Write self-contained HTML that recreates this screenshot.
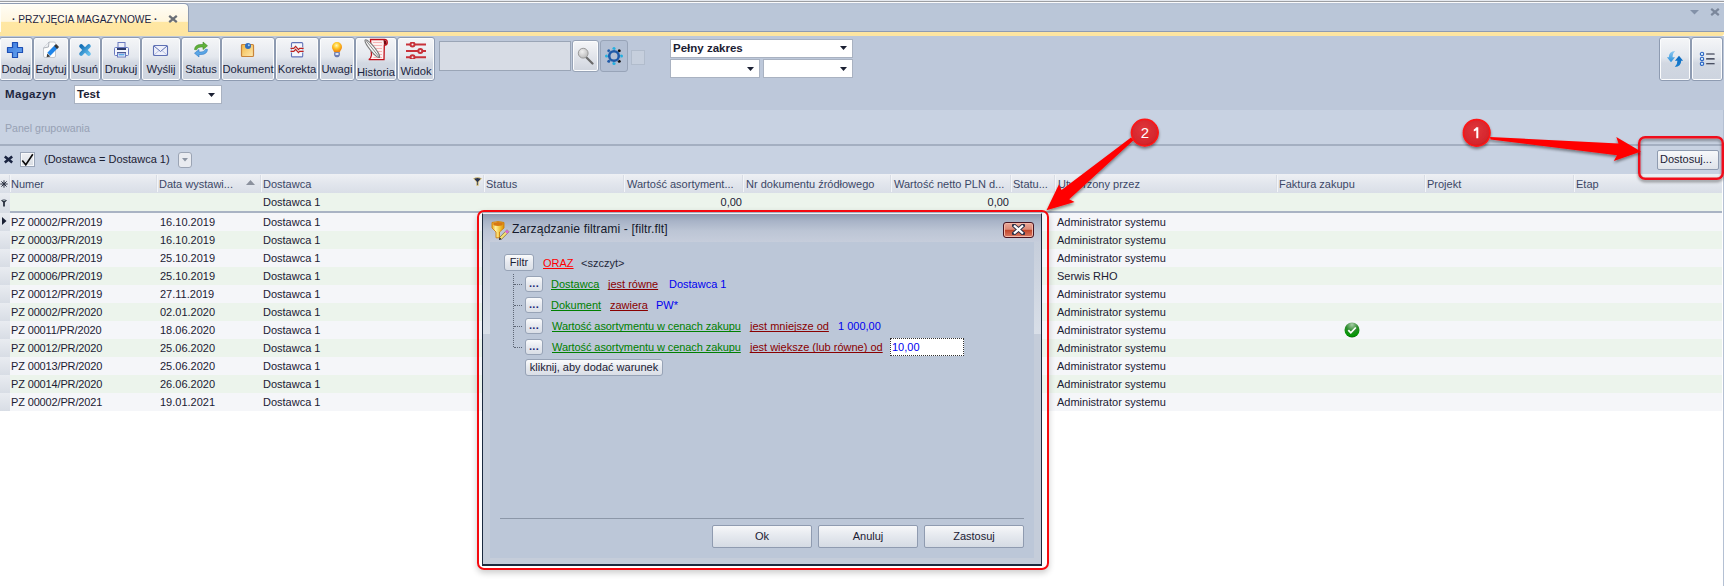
<!DOCTYPE html>
<html><head><meta charset="utf-8">
<style>
*{box-sizing:border-box;margin:0;padding:0}
html,body{width:1724px;height:586px;overflow:hidden;background:#fff;font-family:"Liberation Sans",sans-serif;font-size:11px;color:#1b2033}
.a{position:absolute}
.t{position:absolute;white-space:pre;line-height:13px;text-decoration-skip-ink:none}
.btn{position:absolute;top:37px;height:44px;border:1px solid #8e9bb1;border-radius:3px;box-shadow:inset 0 0 0 1px #fbfcfd;background:linear-gradient(#f5f6f8,#e4e8ee 45%,#d2d8e2 60%,#cdd4df);}
.btn span{position:absolute;left:0;right:0;top:25px;text-align:center;font-size:11.2px;color:#1c2540;white-space:pre}
.ico{position:absolute;left:50%;top:3px;width:20px;height:20px;margin-left:-10px}
.hd{position:absolute;top:175px;height:19px;line-height:19px;color:#3b4766;white-space:pre}
.row{position:absolute;left:0;width:1724px;height:18px}
.cell{position:absolute;top:2px;line-height:14px;white-space:pre;color:#1b2033}
.dbtn{position:absolute;top:525px;height:23px;border:1px solid #8f9bb0;border-radius:2px;background:linear-gradient(#f6f7f9,#e4e8ee 50%,#d5dbe4);text-align:center;line-height:21px;color:#1b2033}
.sbtn{position:absolute;border:1px solid #97a3b6;border-radius:3px;background:linear-gradient(#fafbfc,#e6e9ef 50%,#d9dee6);text-align:center;line-height:14px;color:#1b2033;white-space:pre}
</style></head><body>
<!-- top strip -->
<div class="a" style="left:0;top:0;width:1724px;height:1px;background:#e4e8ef"></div>
<div class="a" style="left:0;top:1px;width:1724px;height:1px;background:#9c9ea2"></div>
<div class="a" style="left:0;top:2px;width:1724px;height:1px;background:#fbfbfc"></div>
<!-- tab bar -->
<div class="a" style="left:0;top:3px;width:1724px;height:29px;background:linear-gradient(#b4c0d3,#bac6d8 3px);border-bottom:1px solid #8e9bb2"></div>
<div class="a" style="left:-1px;top:3px;width:190px;height:30px;border:1px solid #8e9bb2;border-bottom:none;border-radius:0 5px 0 0;box-shadow:inset 1px 1px 0 #fffef8;background:linear-gradient(#fffdf6,#fff6df 60%,#ffe7a3 62%,#ffe5a0)"></div>
<div class="t" style="left:12px;top:13px;font-size:10.2px;color:#1d2440"><b>·</b> PRZYJĘCIA MAGAZYNOWE <b>·</b></div>
<svg class="a" style="left:168px;top:15px" width="10" height="8" viewBox="0 0 10 8"><path d="M1.2 0.8l7.6 6.4M8.8 0.8l-7.6 6.4" stroke="#6a6e76" stroke-width="2.2"/></svg>
<div class="a" style="left:0;top:32px;width:1724px;height:4px;background:#fde5a1;border-radius:0 0 3px 0"></div>
<!-- window controls -->
<svg class="a" style="left:1690px;top:10px" width="9" height="5"><path d="M0 0h9L4.5 4.5z" fill="#8391a8"/></svg>
<svg class="a" style="left:1710px;top:8px" width="10" height="8" viewBox="0 0 10 8"><path d="M1.2 0.8l7.6 6.4M8.8 0.8l-7.6 6.4" stroke="#7b879b" stroke-width="2.2"/></svg>
<!-- toolbar -->
<div class="a" style="left:0;top:36px;width:1724px;height:74px;background:#bdc8da"></div>
<div class="btn" style="left:-1px;width:34px"><span>Dodaj</span></div>
<div class="btn" style="left:33px;width:36px"><span>Edytuj</span></div>
<div class="btn" style="left:69px;width:32px"><span>Usuń</span></div>
<div class="btn" style="left:101px;width:40px"><span>Drukuj</span></div>
<div class="btn" style="left:141px;width:40px"><span>Wyślij</span></div>
<div class="btn" style="left:181px;width:40px"><span>Status</span></div>
<div class="btn" style="left:221px;width:54px"><span>Dokument</span></div>
<div class="btn" style="left:275px;width:44px"><span>Korekta</span></div>
<div class="btn" style="left:319px;width:36px"><span>Uwagi</span></div>
<div class="btn" style="left:355px;width:42px"><span style="top:28px">Historia</span></div>
<div class="btn" style="left:397px;width:38px"><span style="top:26.5px">Widok</span></div>
<!-- search -->
<div class="a" style="left:439px;top:41px;width:132px;height:30px;background:#d7dce5;border:1px solid #9aa5b6"></div>
<div class="a" style="left:572px;top:40px;width:27px;height:32px;border:1px solid #97a3b6;border-radius:3px;box-shadow:inset 0 0 0 1px #fbfcfd;background:linear-gradient(#f5f6f8,#e2e5eb 50%,#d0d5de)"></div>
<div class="a" style="left:600px;top:40px;width:28px;height:32px;border:1px solid #98a4b8;border-radius:3px;background:#b3bfd3"></div>
<div class="a" style="left:631px;top:50px;width:14px;height:15px;border:1px solid #b1bccc;background:#c6cfdd"></div>
<!-- combos -->
<div class="a" style="left:670px;top:39px;width:183px;height:19px;background:#fff;border:1px solid #a9b2c1"></div>
<div class="t" style="left:673px;top:42px;font-weight:bold;font-size:11.5px;color:#1b2033">Pełny zakres</div>
<div class="a" style="left:670px;top:59px;width:90px;height:19px;background:#fff;border:1px solid #a9b2c1"></div>
<div class="a" style="left:763px;top:59px;width:90px;height:19px;background:#fff;border:1px solid #a9b2c1"></div>
<!-- right buttons -->
<div class="a" style="left:1659px;top:37px;width:32px;height:44px;box-shadow:inset 0 0 0 1px #fbfcfd;border:1px solid #8e9bb1;border-radius:3px;background:linear-gradient(#f5f6f8,#e4e8ee 45%,#d2d8e2 60%,#cdd4df)"></div>
<div class="a" style="left:1691px;top:37px;width:32px;height:44px;box-shadow:inset 0 0 0 1px #fbfcfd;border:1px solid #8e9bb1;border-radius:3px;background:linear-gradient(#f5f6f8,#e4e8ee 45%,#d2d8e2 60%,#cdd4df)"></div>
<!-- magazyn -->
<div class="t" style="left:5px;top:88px;font-weight:bold;font-size:11.5px;letter-spacing:0.35px;color:#1e2740">Magazyn</div>
<div class="a" style="left:74px;top:85px;width:148px;height:19px;background:#fff;border:1px solid #a9b2c1"></div>
<div class="t" style="left:77px;top:88px;font-weight:bold;font-size:11.5px;color:#1b2033">Test</div>
<!-- panel grupowania -->
<div class="a" style="left:0;top:110px;width:1724px;height:34px;background:#c8d2e2"></div>
<div class="t" style="left:5px;top:122px;font-size:10.6px;color:#97a1b4">Panel grupowania</div>
<div class="a" style="left:0;top:144px;width:1724px;height:2px;background:#a4afc1"></div>
<!-- filter bar -->
<div class="a" style="left:0;top:146px;width:1724px;height:28px;background:#c8d2e2"></div>
<div class="t" style="left:44px;top:153px;color:#1b2033">(Dostawca = Dostawca 1)</div>
<div class="a" style="left:1657px;top:150px;width:62px;height:20px;border:1px solid #8f9bb0;border-radius:2px;background:linear-gradient(#f7f8fa,#dfe3ea)"></div>
<div class="t" style="left:1660px;top:153px;color:#1b2033">Dostosuj...</div>
<!-- header -->
<div class="a" style="left:0;top:174px;width:1724px;height:19px;background:linear-gradient(#eef0f4,#e2e6ed 50%,#d9dee7)"></div>
<div class="a" style="left:10px;top:175px;width:1px;height:17px;background:#f3f5f8"></div>
<div class="a" style="left:9px;top:175px;width:1px;height:17px;background:#d9dde5"></div>
<div class="hd" style="left:11px">Numer</div>
<div class="a" style="left:157px;top:175px;width:1px;height:17px;background:#f3f5f8"></div>
<div class="a" style="left:156px;top:175px;width:1px;height:17px;background:#d9dde5"></div>
<div class="hd" style="left:159px">Data wystawi...</div>
<div class="a" style="left:261px;top:175px;width:1px;height:17px;background:#f3f5f8"></div>
<div class="a" style="left:260px;top:175px;width:1px;height:17px;background:#d9dde5"></div>
<div class="hd" style="left:263px">Dostawca</div>
<div class="a" style="left:484px;top:175px;width:1px;height:17px;background:#f3f5f8"></div>
<div class="a" style="left:483px;top:175px;width:1px;height:17px;background:#d9dde5"></div>
<div class="hd" style="left:486px">Status</div>
<div class="a" style="left:624px;top:175px;width:1px;height:17px;background:#f3f5f8"></div>
<div class="a" style="left:623px;top:175px;width:1px;height:17px;background:#d9dde5"></div>
<div class="hd" style="left:627px">Wartość asortyment...</div>
<div class="a" style="left:743px;top:175px;width:1px;height:17px;background:#f3f5f8"></div>
<div class="a" style="left:742px;top:175px;width:1px;height:17px;background:#d9dde5"></div>
<div class="hd" style="left:746px">Nr dokumentu źródłowego</div>
<div class="a" style="left:891px;top:175px;width:1px;height:17px;background:#f3f5f8"></div>
<div class="a" style="left:890px;top:175px;width:1px;height:17px;background:#d9dde5"></div>
<div class="hd" style="left:894px">Wartość netto PLN d...</div>
<div class="a" style="left:1011px;top:175px;width:1px;height:17px;background:#f3f5f8"></div>
<div class="a" style="left:1010px;top:175px;width:1px;height:17px;background:#d9dde5"></div>
<div class="hd" style="left:1013px">Statu...</div>
<div class="a" style="left:1055px;top:175px;width:1px;height:17px;background:#f3f5f8"></div>
<div class="a" style="left:1054px;top:175px;width:1px;height:17px;background:#d9dde5"></div>
<div class="hd" style="left:1058px">Utworzony przez</div>
<div class="a" style="left:1277px;top:175px;width:1px;height:17px;background:#f3f5f8"></div>
<div class="a" style="left:1276px;top:175px;width:1px;height:17px;background:#d9dde5"></div>
<div class="hd" style="left:1279px">Faktura zakupu</div>
<div class="a" style="left:1425px;top:175px;width:1px;height:17px;background:#f3f5f8"></div>
<div class="a" style="left:1424px;top:175px;width:1px;height:17px;background:#d9dde5"></div>
<div class="hd" style="left:1427px">Projekt</div>
<div class="a" style="left:1574px;top:175px;width:1px;height:17px;background:#f3f5f8"></div>
<div class="a" style="left:1573px;top:175px;width:1px;height:17px;background:#d9dde5"></div>
<div class="hd" style="left:1576px">Etap</div>
<!-- filter row -->
<div class="a" style="left:0;top:193px;width:1724px;height:18px;background:#ecf4ec"></div>
<div class="a" style="left:0;top:193px;width:10px;height:18px;background:linear-gradient(#e9ecf1,#d8dde5)"></div>
<div class="a" style="left:0;top:211px;width:10px;height:2px;background:#d8dde5"></div><div class="a" style="left:10px;top:211px;width:1714px;height:2px;background:#a9b3c4"></div>
<!-- rows -->
<div class="row" style="top:213px;background:#f5f6f9"><div class="a" style="left:0;top:0;width:10px;height:18px;background:linear-gradient(#e9ecf1,#d8dde5)"></div><div class="cell" style="left:11px;letter-spacing:-0.15px">PZ 00002/PR/2019</div><div class="cell" style="left:160px">16.10.2019</div><div class="cell" style="left:263px">Dostawca 1</div><div class="cell" style="left:1057px">Administrator systemu</div></div>
<div class="row" style="top:231px;background:#ecf4ec"><div class="a" style="left:0;top:0;width:10px;height:18px;background:linear-gradient(#e9ecf1,#d8dde5)"></div><div class="cell" style="left:11px;letter-spacing:-0.15px">PZ 00003/PR/2019</div><div class="cell" style="left:160px">16.10.2019</div><div class="cell" style="left:263px">Dostawca 1</div><div class="cell" style="left:1057px">Administrator systemu</div></div>
<div class="row" style="top:249px;background:#f5f6f9"><div class="a" style="left:0;top:0;width:10px;height:18px;background:linear-gradient(#e9ecf1,#d8dde5)"></div><div class="cell" style="left:11px;letter-spacing:-0.15px">PZ 00008/PR/2019</div><div class="cell" style="left:160px">25.10.2019</div><div class="cell" style="left:263px">Dostawca 1</div><div class="cell" style="left:1057px">Administrator systemu</div></div>
<div class="row" style="top:267px;background:#ecf4ec"><div class="a" style="left:0;top:0;width:10px;height:18px;background:linear-gradient(#e9ecf1,#d8dde5)"></div><div class="cell" style="left:11px;letter-spacing:-0.15px">PZ 00006/PR/2019</div><div class="cell" style="left:160px">25.10.2019</div><div class="cell" style="left:263px">Dostawca 1</div><div class="cell" style="left:1057px">Serwis RHO</div></div>
<div class="row" style="top:285px;background:#f5f6f9"><div class="a" style="left:0;top:0;width:10px;height:18px;background:linear-gradient(#e9ecf1,#d8dde5)"></div><div class="cell" style="left:11px;letter-spacing:-0.15px">PZ 00012/PR/2019</div><div class="cell" style="left:160px">27.11.2019</div><div class="cell" style="left:263px">Dostawca 1</div><div class="cell" style="left:1057px">Administrator systemu</div></div>
<div class="row" style="top:303px;background:#ecf4ec"><div class="a" style="left:0;top:0;width:10px;height:18px;background:linear-gradient(#e9ecf1,#d8dde5)"></div><div class="cell" style="left:11px;letter-spacing:-0.15px">PZ 00002/PR/2020</div><div class="cell" style="left:160px">02.01.2020</div><div class="cell" style="left:263px">Dostawca 1</div><div class="cell" style="left:1057px">Administrator systemu</div></div>
<div class="row" style="top:321px;background:#f5f6f9"><div class="a" style="left:0;top:0;width:10px;height:18px;background:linear-gradient(#e9ecf1,#d8dde5)"></div><div class="cell" style="left:11px;letter-spacing:-0.15px">PZ 00011/PR/2020</div><div class="cell" style="left:160px">18.06.2020</div><div class="cell" style="left:263px">Dostawca 1</div><div class="cell" style="left:1057px">Administrator systemu</div></div>
<div class="row" style="top:339px;background:#ecf4ec"><div class="a" style="left:0;top:0;width:10px;height:18px;background:linear-gradient(#e9ecf1,#d8dde5)"></div><div class="cell" style="left:11px;letter-spacing:-0.15px">PZ 00012/PR/2020</div><div class="cell" style="left:160px">25.06.2020</div><div class="cell" style="left:263px">Dostawca 1</div><div class="cell" style="left:1057px">Administrator systemu</div></div>
<div class="row" style="top:357px;background:#f5f6f9"><div class="a" style="left:0;top:0;width:10px;height:18px;background:linear-gradient(#e9ecf1,#d8dde5)"></div><div class="cell" style="left:11px;letter-spacing:-0.15px">PZ 00013/PR/2020</div><div class="cell" style="left:160px">25.06.2020</div><div class="cell" style="left:263px">Dostawca 1</div><div class="cell" style="left:1057px">Administrator systemu</div></div>
<div class="row" style="top:375px;background:#ecf4ec"><div class="a" style="left:0;top:0;width:10px;height:18px;background:linear-gradient(#e9ecf1,#d8dde5)"></div><div class="cell" style="left:11px;letter-spacing:-0.15px">PZ 00014/PR/2020</div><div class="cell" style="left:160px">26.06.2020</div><div class="cell" style="left:263px">Dostawca 1</div><div class="cell" style="left:1057px">Administrator systemu</div></div>
<div class="row" style="top:393px;background:#f5f6f9"><div class="a" style="left:0;top:0;width:10px;height:18px;background:linear-gradient(#e9ecf1,#d8dde5)"></div><div class="cell" style="left:11px;letter-spacing:-0.15px">PZ 00002/PR/2021</div><div class="cell" style="left:160px">19.01.2021</div><div class="cell" style="left:263px">Dostawca 1</div><div class="cell" style="left:1057px">Administrator systemu</div></div>
<div class="a" style="left:1722px;top:174px;width:1px;height:412px;background:#fff"></div><div class="a" style="left:1723px;top:110px;width:1px;height:476px;background:#b4c0d3"></div>

<!-- filter row values -->
<div class="cell" style="left:263px;top:195px">Dostawca 1</div>
<div class="cell" style="left:700px;top:195px;width:42px;text-align:right">0,00</div>
<div class="cell" style="left:967px;top:195px;width:42px;text-align:right">0,00</div>

<!-- TOOLBAR ICONS -->
<svg class="a" style="left:6px;top:41px" width="18" height="18" viewBox="0 0 18 18">
 <defs><linearGradient id="gp" x1="0" y1="0" x2="1" y2="1"><stop offset="0" stop-color="#3a78de"/><stop offset="1" stop-color="#6aa8f0"/></linearGradient></defs>
 <path d="M6.5 1.5h5v5h5v5h-5v5h-5v-5h-5v-5h5z" fill="url(#gp)" stroke="#1d4fb5" stroke-width="1.2" stroke-linejoin="round"/>
</svg>
<svg class="a" style="left:40px;top:40px" width="20" height="20" viewBox="0 0 20 20">
 <path d="M3.5 8L9 2h5q1.5 0 1.5 1.5V16q0 1.5-1.5 1.5H5q-1.5 0-1.5-1.5z" fill="#fdfdfd" stroke="#c4c8ce" stroke-width="1"/>
 <path d="M3.5 8l5-1 .5-5" fill="#eceef2" stroke="#9aa0aa" stroke-width=".8"/>
 <path d="M8.8 14.2L16.4 6.6" stroke="#1f84e8" stroke-width="4.2"/>
 <path d="M15.6 7.4L17.6 5.4" stroke="#3a3a3a" stroke-width="4.2"/>
 <path d="M6.6 17.3L7.3 13.6 10.4 16.5z" fill="#3c3c3c"/>
</svg>
<svg class="a" style="left:78px;top:43px" width="14" height="14" viewBox="0 0 14 14">
 <defs><linearGradient id="gx" x1="0" y1="0" x2="1" y2="1"><stop offset="0" stop-color="#136fb6"/><stop offset="1" stop-color="#62bdec"/></linearGradient></defs>
 <path d="M3.2 3.2L10.8 10.8M10.8 3.2L3.2 10.8" stroke="url(#gx)" stroke-width="4" stroke-linecap="round"/>
</svg>
<svg class="a" style="left:113px;top:41px" width="17" height="17" viewBox="0 0 17 17">
 <rect x="5" y="1.5" width="7" height="7" fill="#eef0f8" stroke="#6a7ac0" stroke-width="1"/>
 <rect x="1.5" y="6.5" width="14" height="8" rx="1" fill="#f4f6fc" stroke="#6a7ac0" stroke-width="1"/>
 <rect x="4" y="7" width="9" height="2" fill="#2c3a6a"/>
 <rect x="4" y="11" width="9" height="1.2" fill="#2c3a6a"/>
 <rect x="4.5" y="12" width="8" height="4" fill="#fff" stroke="#6a7ac0" stroke-width="1"/>
 <rect x="5.5" y="13" width="6" height="1.5" fill="#5aa8e8"/>
</svg>
<svg class="a" style="left:152px;top:44px" width="17" height="13" viewBox="0 0 17 13">
 <rect x="1.5" y="1.5" width="14" height="10" rx="1" fill="#eef0fa" stroke="#5e70b4" stroke-width="1.1"/>
 <path d="M2 2l6.5 5.5L15 2" fill="none" stroke="#5e70b4" stroke-width="1"/>
 <path d="M2 11l5-4.5M15 11l-5-4.5" fill="none" stroke="#aab4dc" stroke-width=".8"/>
</svg>
<svg class="a" style="left:193px;top:41px" width="16" height="17" viewBox="0 0 16 17">
 <path d="M1.5 8.5Q2 3.5 8 3.5h2V1l4.5 3.8L10 8.5V6H8Q4.5 6 3.6 8.8z" fill="#5fb13a" stroke="#3f8a22" stroke-width=".6"/>
 <path d="M14.5 8.5Q14 13.5 8 13.5H6V16L1.5 12.2 6 8.5V11h2q3.5 0 4.4-2.8z" fill="#5aa6e6" stroke="#2d78c4" stroke-width=".6"/>
</svg>
<svg class="a" style="left:240px;top:42px" width="16" height="16" viewBox="0 0 16 16">
 <defs><linearGradient id="gn" x1="0" y1="0" x2="1" y2="1"><stop offset="0" stop-color="#f3b845"/><stop offset="1" stop-color="#fde9b0"/></linearGradient></defs>
 <rect x="1.5" y="2.5" width="12" height="12" rx="1" fill="url(#gn)" stroke="#c8843a" stroke-width="1.2"/>
 <circle cx="8" cy="4" r="3" fill="#2f6fc0"/><circle cx="8.8" cy="3.2" r="1" fill="#a9d0f5"/>
</svg>
<svg class="a" style="left:290px;top:41px" width="15" height="17" viewBox="0 0 15 17">
 <rect x="1.5" y="1.6" width="11.2" height="14.3" rx="1" fill="#f6f7fc" stroke="#6273b8" stroke-width="1.1"/>
 <g fill="none" stroke-linejoin="miter">
 <path d="M0.5 7.4H3.8L5.6 5.3L8.5 8.6L9.5 7.4H13.6M0.5 10.4H3.8L5.6 8.3L8.5 11.6L9.5 10.4H13.6" stroke="#e4f0f8" stroke-width="2.4"/>
 <path d="M0.5 7.4H3.8L5.6 5.3L8.5 8.6L9.5 7.4H13.6M0.5 10.4H3.8L5.6 8.3L8.5 11.6L9.5 10.4H13.6" stroke="#c0201e" stroke-width="1.1"/>
 </g>
</svg>
<svg class="a" style="left:331px;top:41px" width="12" height="17" viewBox="0 0 12 17">
 <defs><radialGradient id="gb" cx=".45" cy=".35" r=".6"><stop offset="0" stop-color="#fff6b8"/><stop offset=".5" stop-color="#ffc928"/><stop offset="1" stop-color="#f08a10"/></radialGradient></defs>
 <path d="M6 1a5 5 0 0 1 5 5c0 2.3-1.6 3.2-2 5H3C2.6 9.2 1 8.3 1 6a5 5 0 0 1 5-5z" fill="url(#gb)"/>
 <path d="M3.5 11.5h5v2.5q0 2-2.5 2t-2.5-2z" fill="#6d7fb8" stroke="#4a5890" stroke-width=".5"/>
 <rect x="4.5" y="12" width="3" height="2" fill="#dfe4f0"/>
</svg>
<svg class="a" style="left:364px;top:38px" width="24" height="23" viewBox="0 0 24 23">
 <path d="M6.5 1.5H20.5Q23.3 1.5 23.3 4.5Q23.3 7.2 20.3 7.2L20 21.6H4.8Q7 20.5 7.5 17z" fill="#fdf1f1" stroke="#c0101a" stroke-width="1.3"/>
 <path d="M19.5 2Q22.8 2.2 22.6 5.5Q21.5 7 20 6.6z" fill="#7a0810"/>
 <path d="M9 4.5H18M9 7.5H18M9 10.5H18M9 13.5H18M9 16.5H18M9.5 19.5H18" stroke="#f4a6a6" stroke-width=".8"/>
 <ellipse cx="8.3" cy="10.6" rx="11.2" ry="2.4" transform="rotate(51 8.3 10.6)" fill="#f8f8f8" stroke="#7c7c7c" stroke-width="1"/>
 <path d="M2 2.5L15.5 19.5" stroke="#555" stroke-width=".7"/>
</svg>
<svg class="a" style="left:405px;top:42px" width="22" height="17" viewBox="0 0 22 17">
 <g stroke="#c8323a" stroke-width="2" fill="none">
 <path d="M1 2.5h4.5M9.5 2.5H21"/><circle cx="7.5" cy="2.5" r="2"/>
 <path d="M1 9h12M17.5 9H21"/><circle cx="15.3" cy="9" r="2"/>
 <path d="M1 15.2h4.5M9.5 15.2H21"/><circle cx="7.5" cy="15.2" r="2"/>
 </g>
</svg>
<!-- search magnifier -->
<svg class="a" style="left:577px;top:47px" width="18" height="18" viewBox="0 0 18 18">
 <defs><radialGradient id="gm" cx=".4" cy=".35" r=".7"><stop offset="0" stop-color="#f0f0f0"/><stop offset="1" stop-color="#b8b8b8"/></radialGradient></defs>
 <path d="M9 10l6.5 6.5" stroke="#6a6a6a" stroke-width="2.2" stroke-linecap="round"/>
 <circle cx="6.2" cy="6.2" r="4.9" fill="url(#gm)" stroke="#9a9a9a" stroke-width="1"/>
</svg>
<!-- gear -->
<svg class="a" style="left:605px;top:47px" width="18" height="18" viewBox="0 0 18 18">
 <g fill="#1e5aa8">
 <circle cx="9" cy="1.6" r="1.6" fill="#24b0e0"/><circle cx="9" cy="16.4" r="1.6" fill="#24b0e0"/>
 <circle cx="1.6" cy="9" r="1.6" fill="#24b0e0"/><circle cx="16.4" cy="9" r="1.6" fill="#24b0e0"/>
 <circle cx="3.8" cy="3.8" r="1.5"/><circle cx="14.2" cy="3.8" r="1.5" fill="#111"/>
 <circle cx="3.8" cy="14.2" r="1.5"/><circle cx="14.2" cy="14.2" r="1.5" fill="#111"/>
 </g>
 <circle cx="9" cy="9" r="4.8" fill="none" stroke="#1e5aa8" stroke-width="2.6"/>
 <circle cx="9" cy="9" r="6.5" fill="none" stroke="#9ab0cc" stroke-width=".7" stroke-dasharray="1 1.2"/>
</svg>
<!-- combo arrows -->
<svg class="a" style="left:840px;top:46px" width="8" height="5"><path d="M0 0h7L3.5 4z" fill="#1b2033"/></svg>
<svg class="a" style="left:747px;top:67px" width="8" height="5"><path d="M0 0h7L3.5 4z" fill="#1b2033"/></svg>
<svg class="a" style="left:840px;top:67px" width="8" height="5"><path d="M0 0h7L3.5 4z" fill="#1b2033"/></svg>
<svg class="a" style="left:208px;top:93px" width="8" height="5"><path d="M0 0h7L3.5 4z" fill="#1b2033"/></svg>
<!-- right toolbar icons -->
<svg class="a" style="left:1664px;top:49px" width="22" height="20" viewBox="0 0 22 20">
 <defs><linearGradient id="ga1" x1="0" y1="0" x2="0" y2="1"><stop offset="0" stop-color="#8cc8f0"/><stop offset="1" stop-color="#2a90dc"/></linearGradient>
 <linearGradient id="ga2" x1="0" y1="0" x2="0" y2="1"><stop offset="0" stop-color="#0a68c0"/><stop offset="1" stop-color="#1a80d0"/></linearGradient></defs>
 <path d="M11.2 2Q4.8 2.6 4.8 8.3H2.9L7 13.2 11.1 8.3H8.6Q8.6 4 11.2 2z" fill="url(#ga1)"/>
 <path d="M10.8 18Q17.2 17.4 17.2 11.7H19.1L15 6.8 10.9 11.7H13.4Q13.4 16 10.8 18z" fill="url(#ga2)"/>
</svg>
<svg class="a" style="left:1699px;top:51px" width="18" height="16" viewBox="0 0 18 16">
 <g fill="#d8f0fb" stroke="#2a64c4" stroke-width="1.1"><circle cx="3" cy="3" r="1.7"/><circle cx="3" cy="7.9" r="1.7"/><circle cx="3" cy="12.8" r="1.7"/></g>
 <g stroke="#1c2238" stroke-width="1.1" stroke-linecap="round"><path d="M7.6 3h7.6M7.6 7.9h7.6M7.6 12.8h7.6"/></g>
</svg>
<!-- filter bar icons -->
<svg class="a" style="left:3px;top:155px" width="11" height="9" viewBox="0 0 11 9"><path d="M1.8 1.6l7.4 5.8M9.2 1.6l-7.4 5.8" stroke="#1a2440" stroke-width="2.6"/></svg>
<div class="a" style="left:20px;top:152px;width:15px;height:15px;border:1px solid #9aa5b7;box-shadow:inset 0 0 0 1px #f8f9fb;background:linear-gradient(#eef0f3,#d9dde4)"></div>
<svg class="a" style="left:21px;top:153px" width="13" height="13" viewBox="0 0 13 13"><path d="M1.3 7.4L4.8 11.8 11.8 1.2" fill="none" stroke="#0a0a0a" stroke-width="1.6"/></svg>
<div class="a" style="left:178px;top:152px;width:14px;height:16px;border:1px solid #9ba4b4;border-radius:3px;background:#e9ebf0"></div>
<svg class="a" style="left:182px;top:158px" width="6" height="4"><path d="M0 0h6L3 3.5z" fill="#8d95a3"/></svg>
<!-- header icons -->
<svg class="a" style="left:0px;top:180px" width="8" height="8" viewBox="0 0 8 8"><g stroke="#2a3040" stroke-width="1"><path d="M4 0.3v7.4M0.3 4h7.4M1.4 1.4l5.2 5.2M6.6 1.4l-5.2 5.2"/></g><circle cx="4" cy="4" r="1.2" fill="#2a3040"/></svg>
<svg class="a" style="left:246px;top:180px" width="9" height="5"><path d="M0 5h9L4.5 0z" fill="#8b919d"/></svg>
<svg class="a" style="left:473px;top:177px" width="9" height="9" viewBox="0 0 9 9"><path d="M0.5 1.5Q4.5 -0.5 8.5 1.5L5.3 5v3.5H3.7V5z" fill="#2a3553" stroke="#f6d77a" stroke-width=".7"/></svg>
<svg class="a" style="left:0px;top:199px" width="8" height="8" viewBox="0 0 8 8"><path d="M1 1.2Q4 -0.2 7 1.2L4.9 3.6V7.5H3.1V3.6z" fill="#2a3040"/><ellipse cx="4" cy="1.5" rx="1.6" ry=".6" fill="#9aa"/></svg>
<svg class="a" style="left:2px;top:217px" width="5" height="8"><path d="M0 0v8l4.5-4z" fill="#1a2033"/></svg>
<!-- check icon -->
<svg class="a" style="left:1344px;top:322px" width="16" height="16" viewBox="0 0 16 16">
 <defs><radialGradient id="gc" cx=".5" cy=".15" r=".9"><stop offset="0" stop-color="#a8cca8"/><stop offset=".45" stop-color="#2d8a2d"/><stop offset=".8" stop-color="#049804"/><stop offset="1" stop-color="#055a05"/></radialGradient></defs>
 <circle cx="8" cy="8" r="7.5" fill="url(#gc)"/>
 <path d="M4.3 8.2l2.5 2.6 5-5.3" fill="none" stroke="#fff" stroke-width="1.8"/>
</svg>
<!-- DIALOG -->
<div class="a" style="left:476.6px;top:210.3px;width:572.6px;height:360px;border:2.4px solid #f5090f;border-radius:7px;background:transparent;box-shadow:0 3px 6px rgba(0,0,0,.2)"></div>
<div class="a" style="left:482px;top:213px;width:560px;height:353px;background:#c5cdda;border-left:1px solid #1c2a3e;border-right:1px solid #1c2a3e;border-bottom:2px solid #1c2a3e;border-top:1px solid #eef1f5"></div>
<div class="a" style="left:483px;top:214px;width:558px;height:28px;background:linear-gradient(#8f9ab0,#a8b3c7 25%,#bcc5d5 60%,#c6cddb)"></div>
<!-- dialog icon -->
<svg class="a" style="left:488px;top:218px" width="24" height="24" viewBox="0 0 24 24">
 <defs><linearGradient id="gf" x1="0" y1="0" x2="1" y2="0"><stop offset="0" stop-color="#e8a818"/><stop offset=".3" stop-color="#fff2a0"/><stop offset=".7" stop-color="#f0c030"/><stop offset="1" stop-color="#d88a08"/></linearGradient></defs>
 <path d="M4 4.5Q10 2.5 16 4.5V10L11.5 14V19.8H8V14L4 10z" fill="url(#gf)" stroke="#d0800a" stroke-width=".9"/>
 <ellipse cx="10" cy="6" rx="4.8" ry="1.9" fill="#d77812"/>
 <path d="M11.5 19.5L19 11.8 21 13.8 13.5 21.3z" fill="#f2e070" stroke="#6a4a2a" stroke-width=".6"/>
 <path d="M17 13.8L19 11.8 21 13.8 19 15.8z" fill="#d868d8"/>
 <path d="M11.5 19.5L13.5 21.3 11 22z" fill="#111"/>
</svg>
<div class="t" style="left:512px;top:223px;font-size:12.2px;letter-spacing:0.1px;color:#151a2c">Zarządzanie filtrami - [filtr.flt]</div>
<div class="a" style="left:1003px;top:222px;width:31px;height:16px;border:1px solid #4a1420;border-radius:3px;box-shadow:inset 0 0 0 1px #f2b8a8;background:linear-gradient(#eaa898,#dc8a78 45%,#c0462a 52%,#cc5a40 70%,#d87a64)"></div>
<svg class="a" style="left:1012px;top:224px" width="13" height="11" viewBox="0 0 13 11"><path d="M2 1.5l9 8M11 1.5l-9 8" stroke="#2a3048" stroke-width="4" stroke-linecap="square"/><path d="M2 1.5l9 8M11 1.5l-9 8" stroke="#fff" stroke-width="2.3"/></svg>
<div class="a" style="left:490px;top:242px;width:544px;height:316px;background:#bcc7d8"></div>
<div class="a" style="left:483px;top:242px;width:7px;height:92px;background:linear-gradient(#c6cedb,#d9dfe8)"></div>
<div class="a" style="left:1034px;top:242px;width:7px;height:92px;background:linear-gradient(#c6cedb,#d9dfe8)"></div>
<div class="a" style="left:500px;top:518px;width:524px;height:1px;background:#8c97a8"></div>
<div class="dbtn" style="left:712px;width:100px">Ok</div>
<div class="dbtn" style="left:818px;width:100px">Anuluj</div>
<div class="dbtn" style="left:924px;width:100px">Zastosuj</div>
<!-- filter tree -->
<div class="sbtn" style="left:504px;top:254px;width:30px;height:17px">Filtr</div>
<div class="t" style="left:543px;top:257px;color:#ff0000;text-decoration:underline">ORAZ</div>
<div class="t" style="left:581px;top:257px;color:#23283a">&lt;szczyt&gt;</div>
<div class="a" style="left:513px;top:274px;width:0;height:73px;border-left:1px dotted #5d6675"></div>
<div class="a" style="left:514px;top:284px;width:8px;height:0;border-top:1px dotted #5d6675"></div>
<div class="sbtn" style="left:525px;top:276px;width:18px;height:16px;line-height:12px;font-weight:bold;color:#1c2a78;letter-spacing:.3px">...</div>
<div class="a" style="left:514px;top:305px;width:8px;height:0;border-top:1px dotted #5d6675"></div>
<div class="sbtn" style="left:525px;top:297px;width:18px;height:16px;line-height:12px;font-weight:bold;color:#1c2a78;letter-spacing:.3px">...</div>
<div class="a" style="left:514px;top:326px;width:8px;height:0;border-top:1px dotted #5d6675"></div>
<div class="sbtn" style="left:525px;top:318px;width:18px;height:16px;line-height:12px;font-weight:bold;color:#1c2a78;letter-spacing:.3px">...</div>
<div class="a" style="left:514px;top:347px;width:8px;height:0;border-top:1px dotted #5d6675"></div>
<div class="sbtn" style="left:525px;top:339px;width:18px;height:16px;line-height:12px;font-weight:bold;color:#1c2a78;letter-spacing:.3px">...</div>
<div class="t" style="left:551px;top:278px;color:#008000;text-decoration:underline">Dostawca</div>
<div class="t" style="left:608px;top:278px;color:#8a0000;text-decoration:underline">jest równe</div>
<div class="t" style="left:669px;top:278px;color:#0000f0">Dostawca 1</div>
<div class="t" style="left:551px;top:299px;color:#008000;text-decoration:underline">Dokument</div>
<div class="t" style="left:610px;top:299px;color:#8a0000;text-decoration:underline">zawiera</div>
<div class="t" style="left:656px;top:299px;color:#0000f0">PW*</div>
<div class="t" style="left:552px;top:320px;color:#008000;text-decoration:underline;letter-spacing:-0.08px">Wartość asortymentu w cenach zakupu</div>
<div class="t" style="left:750px;top:320px;color:#8a0000;text-decoration:underline">jest mniejsze od</div>
<div class="t" style="left:838px;top:320px;color:#0000f0">1 000,00</div>
<div class="t" style="left:552px;top:341px;color:#008000;text-decoration:underline;letter-spacing:-0.08px">Wartość asortymentu w cenach zakupu</div>
<div class="t" style="left:750px;top:341px;color:#8a0000;text-decoration:underline">jest większe (lub równe) od</div>
<div class="a" style="left:890px;top:338px;width:74px;height:18px;background:#fff;border:1px dotted #333"></div>
<div class="t" style="left:892px;top:341px;color:#0000f0">10,00</div>
<div class="sbtn" style="left:525px;top:359px;width:138px;height:17px">kliknij, aby dodać warunek</div>

<!-- ANNOTATIONS -->
<svg class="a" style="left:0;top:0" width="1724" height="586" viewBox="0 0 1724 586">
 <defs>
  <radialGradient id="gr" cx=".45" cy=".4" r=".6"><stop offset="0" stop-color="#e0363c"/><stop offset=".85" stop-color="#d5262c"/><stop offset="1" stop-color="#c81c22"/></radialGradient>
  <filter id="sh" x="-30%" y="-30%" width="160%" height="160%"><feGaussianBlur in="SourceAlpha" stdDeviation="1.6"/><feOffset dx="0" dy="1.5"/><feComponentTransfer><feFuncA type="linear" slope=".45"/></feComponentTransfer><feMerge><feMergeNode/><feMergeNode in="SourceGraphic"/></feMerge></filter>
 </defs>
 <rect x="1639.2" y="137.2" width="83.6" height="41.6" rx="6" fill="none" stroke="#f0101a" stroke-width="2.4" filter="url(#sh)"/>
 <g filter="url(#sh)">
  <path d="M1490 137L1618.5 143.4L1616.3 137.1L1641 151.5L1613.8 161L1617 155.3L1490.5 139.4z" fill="#ff0000"/>
  <path d="M1131 137.6L1061.5 190L1059 184.3L1046.5 210.2L1074.6 202L1069.2 199.2L1133.5 140.3z" fill="#ff0000"/>
  <circle cx="1476.7" cy="132.8" r="13.3" fill="url(#gr)" stroke="#ff1414" stroke-width="1.6"/>
  <circle cx="1144.8" cy="132.6" r="13.3" fill="url(#gr)" stroke="#ff1414" stroke-width="1.6"/>
 </g>
 <path d="M1476.3 127.2H1478.3V138.2H1476.3V130.2Q1475.1 131 1473.8 131.2V129.5Q1475.4 128.7 1476.3 127.2z" fill="#fff"/>
 <text x="1144.8" y="137.6" text-anchor="middle" style="font-family:'Liberation Sans',sans-serif;font-size:15px" fill="#fff">2</text>
</svg>
</body></html>
